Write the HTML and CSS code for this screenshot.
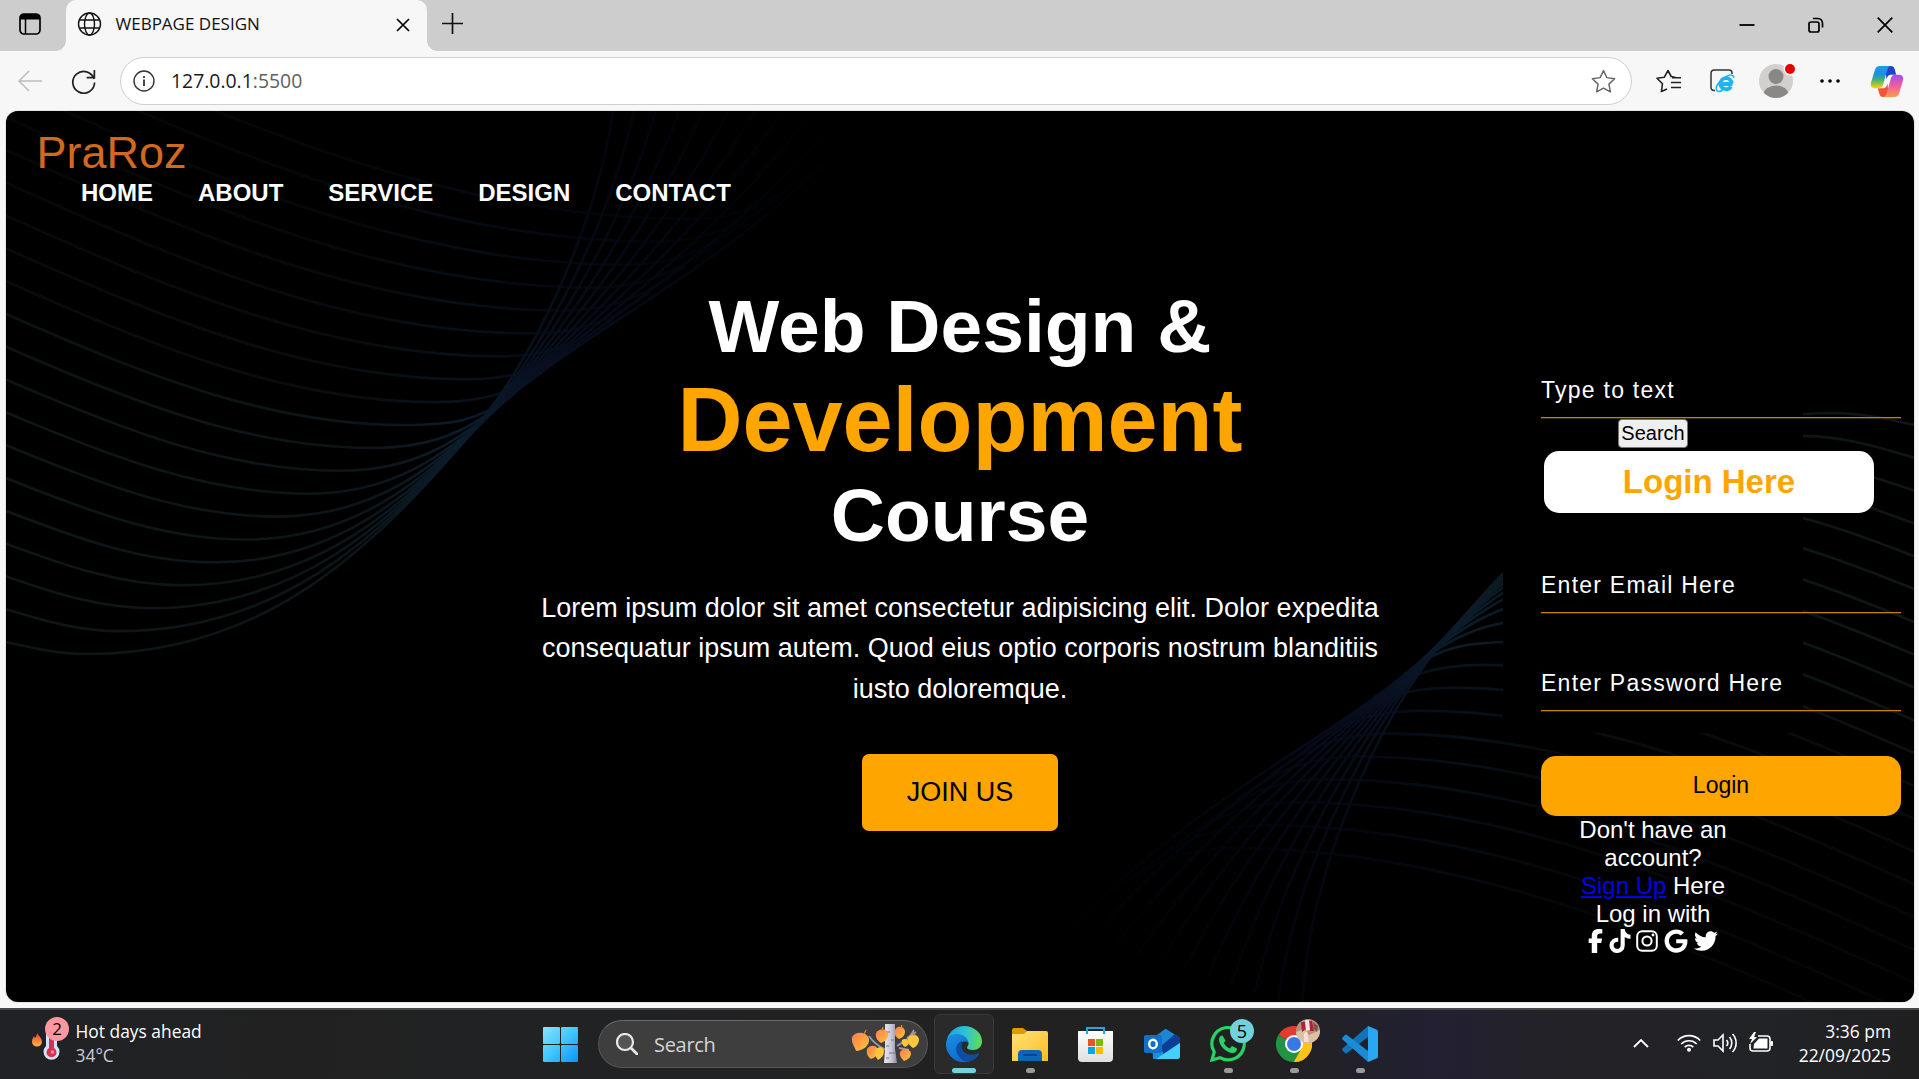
FILE: index.html
```html
<!DOCTYPE html>
<html lang="en">
<head>
<meta charset="utf-8">
<title>WEBPAGE DESIGN</title>
<link rel="stylesheet" href="styles.css">
</head>
<body>
<div class="tabstrip">
  <svg class="workspaces" viewBox="0 0 22 22"><rect x="1" y="1" width="20" height="20" rx="4" fill="none" stroke="#000" stroke-width="1.7"/><path d="M1 6.5V4.500A3.500 3.500 0 0 1 4.500 1h13A3.500 3.500 0 0 1 21 4.500v2z"/><path d="M6.500 6v15" stroke="#000" stroke-width="1.500"/></svg>
  <div class="tab">
    <svg class="globe" viewBox="0 0 24 24" fill="none" stroke="#111" stroke-width="1.400"><circle cx="12" cy="12" r="11"/><ellipse cx="12" cy="12" rx="5" ry="11"/><path d="M2 8h20M2 16h20"/></svg>
    <span class="tab-title">WEBPAGE DESIGN</span>
    <svg class="tab-close" viewBox="0 0 14 14"><path d="M1 1l12 12M13 1L1 13" stroke="#000" stroke-width="1.700"/></svg>
  </div>
  <svg class="newtab" viewBox="0 0 20 20"><path d="M10 0v20M0 10h20" stroke="#111" stroke-width="1.600"/></svg>
  <div class="winctl">
    <svg width="16" height="16" viewBox="0 0 16 16"><path d="M.5 8h15" stroke="#000" stroke-width="1.800"/></svg>
    <svg width="16" height="16" viewBox="0 0 16 16" fill="none" stroke="#000" stroke-width="1.700"><rect x="1" y="5" width="10" height="10" rx="2"/><path d="M5 1.500h5a5 5 0 0 1 4.500 4.500v4.500"/></svg>
    <svg width="16" height="16" viewBox="0 0 16 16"><path d="M.7.7l14.600 14.600M15.300.7L.7 15.300" stroke="#000" stroke-width="1.700"/></svg>
  </div>
</div>
<div class="toolbar">
  <svg class="back" viewBox="0 0 24 22" fill="none" stroke="#bdbdbd" stroke-width="1.500"><path d="M24 11H1M11 1L1 11l10 10"/></svg>
  <svg class="reload" viewBox="0 0 26 26" fill="none" stroke="#222" stroke-width="1.800"><path d="M24 10.500A11.300 11.300 0 1 0 24.500 14M24.300 1v8h-8"/></svg>
  <div class="address">
    <svg class="info" viewBox="0 0 22 22" fill="none" stroke="#333" stroke-width="1.400"><circle cx="11" cy="11" r="10"/><path d="M11 9.500v6.500M11 6v2" stroke-width="1.800"/></svg>
    <span class="url">127.0.0.1<span class="port">:5500</span></span>
    <svg class="star" viewBox="0 0 24 24" fill="none" stroke="#666" stroke-width="1.400" stroke-linejoin="round"><path d="M12 1.500l3.200 6.800 7.500 1-5.500 5.200 1.400 7.400-6.600-3.600-6.600 3.600 1.400-7.400L1.300 9.300l7.500-1z"/></svg>
  </div>
  <svg class="favs" viewBox="0 0 25 24" fill="none" stroke="#222" stroke-width="1.600" stroke-linejoin="round"><path d="M11 20l-5.600 2.500 1.100-7.800L1 9.300l7.200-1L12 1.500l3.200 6 4.300 1M16 8.800h9M15 13.500h10M15 18.500h10"/></svg>
  <svg class="iemode" viewBox="0 0 25 24"><path d="M5 21.500H4A3 3 0 0 1 1 18V4a3 3 0 0 1 3-3h15a3 3 0 0 1 3 3v1" fill="none" stroke="#333" stroke-width="1.500"/><path d="M22.500 15H10.500a5.600 5.600 0 0 1 11.200-.5M10.500 14.500a5.600 5.600 0 0 0 10.400 3" fill="none" stroke="#1eb4ef" stroke-width="3.800"/><path d="M23.500 9c1-3-3-4-7-1.500C11 10 5 17 6.500 21c1 2.500 4 1.500 6 0" fill="none" stroke="#1eb4ef" stroke-width="1.600"/></svg>
  <div class="profile">
    <svg viewBox="0 0 34 34"><defs><clipPath id="pc"><circle cx="17" cy="17" r="17"/></clipPath></defs><g clip-path="url(#pc)"><rect width="34" height="34" fill="#d2d0ce"/><circle cx="17" cy="12.500" r="7.500" fill="#8a8886"/><ellipse cx="17" cy="31" rx="12.500" ry="9.500" fill="#8a8886"/></g></svg>
    <i class="alert"></i>
  </div>
  <svg class="dots" viewBox="0 0 20 4"><circle cx="2" cy="2" r="1.800"/><circle cx="10" cy="2" r="1.800"/><circle cx="18" cy="2" r="1.800"/></svg>
  <svg class="copilot" viewBox="0 0 34 32"><defs>
    <linearGradient id="cA" x1="0" y1="0" x2="0" y2="1"><stop offset="0" stop-color="#1b9de8"/><stop offset=".35" stop-color="#1b8fe0"/><stop offset=".6" stop-color="#3fb07c"/><stop offset="1" stop-color="#ffd400"/></linearGradient>
    <linearGradient id="cB" x1="0" y1="0" x2="0" y2="1"><stop offset="0" stop-color="#a24cf0"/><stop offset=".5" stop-color="#ee5f9b"/><stop offset="1" stop-color="#ff9a4d"/></linearGradient></defs>
    <path d="M15 0h6c2.500 0 3.500 1.500 4 3.500L26.500 9h-5c-3.500 0-4 2-5 5z" fill="#1a47c8"/>
    <path d="M19 32h-6c-2.500 0-3.500-1.500-4-3.500L7.500 23h5c3.500 0 4-2 5-5z" fill="#f4553a"/>
    <path d="M9.500 0H21c-2 0-3 1.500-3.500 3.500L13 19c-.8 2.500-2 4-4.500 4H4.500c-3.500 0-5-3-4-6L4.500 4C5.300 1.500 7 0 9.500 0z" fill="url(#cA)"/>
    <path d="M24.500 32H13c2 0 3-1.500 3.500-3.500L21 13c.8-2.500 2-4 4.500-4h4c3.500 0 5 3 4 6l-4 13c-.8 2.500-2.500 4-5 4z" fill="url(#cB)"/></svg>
</div>

<div class="page">
  <svg class="waves" viewBox="6 111 1908 891" aria-hidden="true">
    <defs>
      <linearGradient id="wave" gradientUnits="userSpaceOnUse" x1="6" y1="0" x2="860" y2="0">
        <stop offset="0" stop-color="#0f1616"/><stop offset=".42" stop-color="#0c1519"/><stop offset=".53" stop-color="#0b1c2a"/><stop offset=".62" stop-color="#091123"/><stop offset=".75" stop-color="#060a1a"/><stop offset="1" stop-color="#000"/>
      </linearGradient>
      <linearGradient id="fade" gradientUnits="userSpaceOnUse" x1="0" y1="111" x2="0" y2="420"><stop offset="0" stop-color="#000" stop-opacity=".6"/><stop offset="1" stop-color="#000" stop-opacity="0"/></linearGradient>
      <g id="family"><g id="strands" fill="none" stroke="url(#wave)" stroke-width="2.600"></g><rect x="0" y="20" width="900" height="400" fill="url(#fade)"/></g>
    </defs>
    <use href="#family"/>
    <use href="#family" transform="rotate(180 960 533.500)"/>
  </svg>

  <header>
    <div class="brand">PraRoz</div>
    <nav><a>HOME</a><a>ABOUT</a><a>SERVICE</a><a>DESIGN</a><a>CONTACT</a></nav>
  </header>
  <main>
    <section class="hero">
      <h1><span>Web Design &amp;</span><span class="accent">Development</span><span class="last">Course</span></h1>
      <p>Lorem ipsum dolor sit amet consectetur adipisicing elit. Dolor expedita<br>consequatur ipsum autem. Quod eius optio corporis nostrum blanditiis<br>iusto doloremque.</p>
      <div class="join">JOIN US</div>
    </section>
    <aside class="panel">
      <div class="field">Type to text</div>
      <div class="search-btn">Search</div>
      <h2>Login Here</h2>
      <div class="field email">Enter Email Here</div>
      <div class="field password">Enter Password Here</div>
      <div class="login-btn">Login</div>
      <div class="signup">Don't have an<br>account?<br><a>Sign Up</a> Here<br>Log in with</div>
      <div class="social">
        <svg width="15" height="24" viewBox="0 0 320 512" preserveAspectRatio="none"><path d="M80 299.300V512H196V299.300h86.500l18-97.800H196V166.900c0-51.700 20.300-71.500 72.700-71.500 16.300 0 29.400.4 37 1.200V7.900C291.400 4 256.400 0 236.200 0 129.300 0 80 50.500 80 159.400v42.100H14v97.800z"/></svg>
        <svg width="22" height="24" viewBox="0 0 448 512"><path d="M448 209.900a210.100 210.100 0 0 1-122.800-39.300v178.800A162.600 162.600 0 1 1 185 188.300v89.900a74.600 74.600 0 1 0 52.200 71.200V0h88a121.200 121.200 0 0 0 1.900 22.200 122.200 122.200 0 0 0 53.900 80.200 121.400 121.400 0 0 0 67 20.100z"/></svg>
        <svg width="22" height="22" viewBox="0 0 22 22"><rect x="1.200" y="1.200" width="19.600" height="19.600" rx="5" fill="none" stroke="#fff" stroke-width="2"/><circle cx="11" cy="11" r="4.600" fill="none" stroke="#fff" stroke-width="2"/><circle cx="17" cy="5" r="1.400"/></svg>
        <svg width="24" height="24" viewBox="0 0 488 512"><path d="M488 261.800C488 403.300 391.100 504 248 504 110.800 504 0 393.200 0 256S110.800 8 248 8c66.800 0 123 24.500 166.300 64.900l-67.500 64.900C258.500 52.600 94.300 116.600 94.300 256c0 86.500 69.100 156.600 153.700 156.600 98.200 0 135-70.400 140.800-106.900H248v-85.300h236.100c2.300 12.700 3.900 24.900 3.900 41.400z"/></svg>
        <svg width="24" height="24" viewBox="0 0 512 512"><path d="M459.400 151.700c.3 4.500.3 9.100.3 13.600 0 138.700-105.600 298.600-298.600 298.600-59.500 0-114.700-17.200-161.100-47.100 8.400 1 16.600 1.300 25.300 1.300 49.100 0 94.200-16.600 130.300-44.800-46.100-1-84.800-31.200-98.100-72.800 6.500 1 13 1.600 19.800 1.600 9.400 0 18.800-1.300 27.600-3.600-48.100-9.700-84.100-52-84.100-103v-1.300c14 7.800 30.200 12.700 47.400 13.300-28.300-18.800-46.800-51-46.800-87.400 0-19.500 5.200-37.400 14.300-53 51.700 63.700 129.300 105.300 216.400 109.800-1.600-7.800-2.600-15.900-2.600-24 0-57.800 46.800-104.900 104.900-104.900 30.200 0 57.500 12.700 76.700 33.100 23.700-4.500 46.500-13.300 66.600-25.300-7.800 24.400-24.400 44.800-46.100 57.800 21.100-2.300 41.600-8.100 60.400-16.200-14.300 20.800-32.200 39.300-52.600 54.300z"/></svg>
      </div>
    </aside>
  </main>
</div>

<div class="taskbar">
  <div class="weather">
    <div class="weather-icon">
      <svg viewBox="0 0 38 46"><defs><linearGradient id="fl" x1="0" y1="0" x2="0" y2="1"><stop offset="0" stop-color="#e8452a"/><stop offset="1" stop-color="#ffb347"/></linearGradient></defs><path d="M5 16c1 2 5 5 5 9a5 4.500 0 0 1-10 0c0-3 1-4 2-6l1 2c1-1 2-3 2-5z" fill="url(#fl)"/><path d="M14 12a5.500 5.500 0 0 1 11 0v17a8 8 0 1 1-11 0z" fill="#cfe4fa"/><path d="M17 14h5v17a5 5 0 1 1-5 0z" fill="#d8304e"/><circle cx="20.500" cy="35" r="1.800" fill="#ff8aa0"/></svg>
      <span class="badge two">2</span>
    </div>
    <div class="weather-text">Hot days ahead<br><span>34°C</span></div>
  </div>
  <svg class="start" viewBox="0 0 35 35"><defs><linearGradient id="st" gradientUnits="userSpaceOnUse" x1="0" y1="0" x2="35" y2="35"><stop offset="0" stop-color="#8ae2ff"/><stop offset=".5" stop-color="#41c6fb"/><stop offset="1" stop-color="#0a94fb"/></linearGradient></defs><g fill="url(#st)"><rect width="17" height="17" rx="1"/><rect x="18" width="17" height="17" rx="1"/><rect y="18" width="17" height="17" rx="1"/><rect x="18" y="18" width="17" height="17" rx="1"/></g></svg>
  <div class="search">
    <svg class="lens" viewBox="0 0 22 22"><circle cx="9" cy="9" r="8" fill="#555" stroke="#e8e8e8" stroke-width="2.200"/><path d="M15 15l6 6" stroke="#e8e8e8" stroke-width="2.800" stroke-linecap="round"/></svg>
    <span>Search</span>
    <svg class="tree" viewBox="0 0 68 40"><defs><linearGradient id="lf" x1="0" y1="0" x2="1" y2="1"><stop offset="0" stop-color="#ff7a4d"/><stop offset="1" stop-color="#ffc53a"/></linearGradient><linearGradient id="tk"><stop offset="0" stop-color="#e8e6ef"/><stop offset=".6" stop-color="#c6c4d2"/><stop offset="1" stop-color="#8d8b9c"/></linearGradient></defs>
      <path d="M35 26Q23 20 18 12M46 22l12-8 5-8M56 14l9-6M48 24l10 2" stroke="#9a98a8" stroke-width="1.800" fill="none"/><path d="M34 0h10v25l2 14H33l1-14z" fill="url(#tk)"/><path d="M35 8h4M40 16h3M35 22h3M38 29h6M35 34h3" stroke="#77758a" stroke-width="1"/>
      <g fill="url(#lf)"><path d="M1 13C4 7 16 7 18 15c1 7-7 12-13 12-1-4-5-8-4-14z"/><path d="M25 9c3-5 10-5 12 0 1 6-4 9-7 10-3-2-6-5-5-10z"/><path d="M44 6c2-5 9-4 10 1 0 5-3 7-6 8-3-2-5-4-4-9z"/><path d="M49 28c3-4 9-4 11 1 0 5-4 7-7 8-2-2-5-5-4-9z"/><path d="M16 25c3-5 10-4 11 1 0 6-4 8-7 9-3-2-5-5-4-10z"/></g>
      <g fill="#fdc63c"><path d="M25 25c3-3 8-2 8 2 0 5-3 7-6 9-2-2-4-7-2-11z"/><path d="M57 14c3-5 10-4 11 1 0 5-3 8-6 9-3-2-6-5-5-10z"/><path d="M51 16c2-2 6-1 7 2 0 3-2 4-4 5-2-1-4-4-3-7z"/></g>
      <path d="M13 10l2-4M31 7l1-4M50 4l1-3M63 12l1-3" stroke="#d98a22" stroke-width="1.200"/></svg>
  </div>
  <div class="apps">
    <div class="app active"><svg viewBox="0 0 36 36"><defs><linearGradient id="eg" x1="0" y1=".4" x2="1" y2=".5"><stop offset="0" stop-color="#1a9fe0"/><stop offset=".5" stop-color="#2fc2d8"/><stop offset="1" stop-color="#5fdc57"/></linearGradient><linearGradient id="eb" x1="0" y1="0" x2=".5" y2="1"><stop offset="0" stop-color="#1b8fe0"/><stop offset="1" stop-color="#0a6cd0"/></linearGradient></defs><path d="M1 13C4 4 11 0 18 0c10 0 18 7 18 15 0 6-4 9-9 9-4 0-6-1-6-2.500 0-1 1.500-1.500 1.500-4C22 12 15 7 1 13z" fill="url(#eg)"/><path d="M0 18C0 12 5 8 11 8c7 0 11 4 11.500 9-3-3-9-1-10 4-1 7 4 13 11 14.500A18 18 0 0 1 0 18z" fill="url(#eb)"/><path d="M16 15c-5 2-7 6-5.500 11C12 31 17 35.500 21 35.800 27 35 31 32 33 28.500c.5-1-.5-1.500-1.300-1-7 3-15 0-16-6-.3-3 .3-5 .3-6.500z" fill="#0c4fa0"/></svg><i></i></div>
    <div class="app"><svg viewBox="0 0 36 36"><defs><linearGradient id="ex" x1="0" y1="0" x2="1" y2="1"><stop offset="0" stop-color="#ffe17a"/><stop offset="1" stop-color="#fdbf22"/></linearGradient></defs><path d="M0 4a2 2 0 0 1 2-2h9l4 3-3 5H0z" fill="#dd9b05"/><path d="M0 8h12l3-3h19a2 2 0 0 1 2 2v28H0z" fill="url(#ex)"/><path d="M6 35v-7a4 4 0 0 1 4-4h16a4 4 0 0 1 4 4v7z" fill="#0c66b8"/><path d="M11 29h14" stroke="#0a4685" stroke-width="2"/></svg><i></i></div>
    <div class="app"><svg viewBox="0 0 36 36"><defs><linearGradient id="so" x1="0" y1="0" x2="0" y2="1"><stop offset="0" stop-color="#fff"/><stop offset="1" stop-color="#dedede"/></linearGradient></defs><path d="M0 5h35v27a4 4 0 0 1-4 4H4a4 4 0 0 1-4-4z" fill="url(#so)"/><path d="M9 8V2h17v6" fill="none" stroke="#26a6de" stroke-width="2"/><path d="M10 13h7v7h-7z" fill="#f25022"/><path d="M18 13h7v7h-7z" fill="#7fba00"/><path d="M10 21h7v7h-7z" fill="#00a4ef"/><path d="M18 21h7v7h-7z" fill="#ffb900"/></svg></div>
    <div class="app"><svg viewBox="0 0 36 36"><path d="M8 13L22 3l14 9v18a3 3 0 0 1-3 3H9z" fill="#1b8fdc"/><path d="M8 13L21 3l12 7-17 12z" fill="#1c86d4"/><path d="M16 21L31 8l5 4v5L20 28z" fill="#0c3f93"/><path d="M12 33l24-16v13a3 3 0 0 1-3 3z" fill="#43d0fb"/><rect y="9" width="18" height="18" rx="2" fill="#1370c8"/><ellipse cx="9" cy="18" rx="3.800" ry="4.300" fill="none" stroke="#fff" stroke-width="2.400"/></svg></div>
    <div class="app"><svg viewBox="0 0 36 36"><path d="M2 34l2.200-8A16.200 16.200 0 1 1 10 31.700z" fill="none" stroke="#25d366" stroke-width="3.200"/><path d="M12.500 9.500c-1-.5-3.500 1-3.500 4C9 20 17 27 22.500 27c3 0 4.500-2 4.500-4.500l-5-2.500-2.200 2.500c-3-1.200-5-3.300-6-5.500l1.700-2.500z" fill="#25d366"/></svg><span class="badge five">5</span><i></i></div>
    <div class="app"><svg viewBox="0 0 36 36"><path d="M18 18L2.400 9A18 18 0 0 1 33.600 9z" fill="#e33b2e"/><path d="M18 18L33.600 9A18 18 0 0 1 18 36z" fill="#fcc419"/><path d="M18 18l7.500 4.500L18 36A18 18 0 0 1 2.400 9z" fill="#229342"/><path d="M18 9h15.600A18 18 0 0 1 18 36l8-13.500z" fill="#fcc419"/><circle cx="18" cy="18" r="9" fill="#fff"/><circle cx="18" cy="18" r="7" fill="#3b78e7"/></svg><svg class="avatar" viewBox="0 0 24 24"><defs><clipPath id="av"><circle cx="12" cy="12" r="12"/></clipPath></defs><g clip-path="url(#av)"><rect width="24" height="24" fill="#b98f7c"/><path d="M0 13l8-3 5 6 11-5v13H0z" fill="#dcc0a4"/><path d="M5 3l4 0 1 7-4 3zM13 2h3l2 10h-4z" fill="#b21f36"/><path d="M9 1h4l1 10-4 1z" fill="#efe2dc"/><path d="M17 3l5 4-1 6-3-3z" fill="#7c5146"/><path d="M8 15l3-3 2 11H8z" fill="#f3dfd3"/></g></svg><i></i></div>
    <div class="app"><svg viewBox="0 0 36 36"><path d="M26 0v11L5 27q-1 1-2 0l-2.500-2.500q-.8-1 0-2z" fill="#1173b8"/><path d="M.5 13.500q-.8-1 0-2L3 9q1-1 2 0l21 16v11z" fill="#1b8bd6"/><path d="M26 0l8.500 3.500Q36 4 36 6v24q0 2-1.500 2.500L26 36z" fill="#2ba6f2"/></svg><i></i></div>
  </div>
  <div class="tray">
    <svg class="chev" viewBox="0 0 16 9"><path d="M1 8l7-7 7 7" fill="none" stroke="#fff" stroke-width="1.800"/></svg>
    <svg class="wifi" viewBox="0 0 24 18" fill="none" stroke="#fff" stroke-width="1.700"><path d="M.8 6.500a15.500 15.500 0 0 1 22.400 0M4.200 10a11 11 0 0 1 15.600 0M7.700 13.200a6.200 6.200 0 0 1 8.600 0"/><circle cx="12" cy="15.800" r="2" fill="#fff" stroke="none"/></svg>
    <svg class="vol" viewBox="0 0 24 20" fill="none" stroke="#fff" stroke-width="1.600"><path d="M1 7h4l5-5v16l-5-5H1zM13.500 7a4.500 4.500 0 0 1 0 6M16.500 4a9 9 0 0 1 0 12M19.500 1a13 13 0 0 1 0 18"/></svg>
    <svg class="bat" viewBox="0 0 24 20"><path d="M9 4h9a3 3 0 0 1 3 3v9a3 3 0 0 1-3 3H4a3 3 0 0 1-3-3v-4" fill="none" stroke="#fff" stroke-width="1.600"/><path d="M10 6.500h8.500v10H4.500L5 12z" fill="#fff"/><rect x="21.500" y="9" width="2.500" height="5" rx="1" fill="#fff"/><path d="M5 0L0 7h3l-2 5 7-7H5l2-5z" fill="#fff"/></svg>
    <div class="clock">3:36 pm<br>22/09/2025</div>
  </div>
</div>
<script src="waves.js"></script>
</body>
</html>
```
FILE: styles.css
```css
* { box-sizing: border-box; }
body { margin: 0; width: 1919px; height: 1079px; overflow: hidden; display: flex; flex-direction: column; background: #f7f7f7; font-family: "Open Sans", "Noto Sans", sans-serif; }
svg { display: block; flex: none; }

.tabstrip { height: 51px; flex: none; background: #cdcdcd; display: flex; align-items: flex-start; }
.workspaces { width: 22px; height: 22px; margin: 13px 0 0 19px; }
.tab { position: relative; width: 361px; height: 51px; margin-left: 25px; padding-left: 10.500px; background: #f7f7f7; border-radius: 10px 10px 0 0; display: flex; align-items: flex-start; }
.tab::before, .tab::after { content: ""; position: absolute; bottom: 0; width: 10px; height: 10px; }
.tab::before { left: -10px; background: radial-gradient(circle at 0 0, transparent 9.5px, #f7f7f7 10px); }
.tab::after { right: -10px; background: radial-gradient(circle at 100% 0, transparent 9.5px, #f7f7f7 10px); }
.globe { width: 25px; height: 24px; margin-top: 12px; }
.tab-title { margin-left: 14px; width: 266px; font-size: 17px; line-height: 24px; margin-top: 12px; color: #111; white-space: nowrap; }
.tab-close { width: 14px; height: 14px; margin-top: 18px; margin-left: 14px; }
.newtab { width: 21px; height: 21px; margin: 13px 0 0 15px; }
.winctl { margin: 17px 26px 0 auto; display: flex; gap: 53px; }

.toolbar { height: 60px; flex: none; display: flex; align-items: center; }
.back { width: 24px; height: 22px; margin-left: 18px; }
.reload { width: 25px; height: 25px; margin-left: 29px; }
.address { width: 1512px; height: 48px; margin-left: 24px; border: 1.5px solid #cfcfcf; border-radius: 24px; background: #fff; display: flex; align-items: center; padding: 0 15px 0 12px; }
.info { width: 22px; height: 22px; }
.url { margin-left: 16px; font-size: 19.400px; line-height: 26px; color: #1b1b1b; flex: 1; }
.port { color: #5f5f5f; }
.star { width: 25px; height: 25px; }
.favs { width: 25px; height: 24px; margin-left: 23.500px; }
.iemode { width: 25px; height: 24px; margin-left: 29px; }
.profile { position: relative; width: 34px; height: 34px; margin-left: 24.500px; }
.alert { position: absolute; right: -2px; top: 0; width: 10px; height: 10px; border-radius: 50%; background: #e60000; box-shadow: 0 0 0 1.5px #f7f7f7; }
.dots { width: 20px; height: 4px; margin-left: 27px; }
.copilot { width: 34px; height: 31px; margin-left: 30px; }

.page { position: relative; z-index: 0; height: 891px; flex: none; margin: 0 5px 0 6px; background: #000; border-radius: 12px; overflow: hidden; color: #fff; font-family: "Liberation Sans", Arial, sans-serif; padding-top: 16px; box-shadow: 0 0 0 1px #e4e4e4; }
.waves { position: absolute; inset: 0; z-index: -1; width: 1908px; height: 891px; }
.brand { margin-left: 30.500px; font-size: 45px; line-height: 51px; color: #d2691e; }
nav { display: flex; gap: 45px; margin-left: 75px; font-size: 24px; line-height: 29px; font-weight: bold; }
main { display: flex; align-items: flex-start; }
.hero { width: 860px; margin: 74px 0 0 524px; text-align: center; display: flex; flex-direction: column; align-items: center; }
h1 { margin: 0; font-size: 75px; line-height: 90px; }
h1 span { display: block; }
h1 .accent { color: #ffa500; font-size: 90px; line-height: 98px; }
h1 .last { line-height: 92px; }
.hero p { margin: 26.500px 0 0; font-size: 27px; line-height: 40.6px; white-space: nowrap; }
.join { margin-top: 44.500px; width: 196px; height: 77px; border-radius: 7px; background: #ffa500; color: #000; font-size: 27px; line-height: 76px; }
.panel { width: 300px; height: 486px; margin: 40px 0 0 113px; padding: 126px 0 0 38px; background: #000; }
.field { width: 360px; height: 45px; font-size: 23px; line-height: 34px; letter-spacing: 1.25px; border-bottom: 1px solid #c98200; box-shadow: 0 1px 0 #3d2700; }
.search-btn { width: 70px; height: 29px; margin: 1px 0 0 77px; border: 1px solid #767676; border-radius: 4px; background: #efefef; color: #000; font-size: 20px; line-height: 27px; text-align: center; }
h2 { width: 330px; height: 62px; margin: 3px 0 0 3px; border-radius: 15px; background: #fff; color: #ffa500; font-size: 33px; line-height: 61px; text-align: center; }
.email { margin-top: 55px; }
.password { margin-top: 53px; }
.login-btn { width: 360px; height: 60px; margin-top: 45px; border-radius: 15px; background: #ffa500; color: #000; font-size: 23px; line-height: 58px; text-align: center; }
.signup { width: 300px; margin-left: -38px; font-size: 24px; line-height: 28px; text-align: center; }
.signup a { color: #0000ee; text-decoration: underline; }
.social { display: flex; align-items: center; gap: 5.700px; margin: 0 0 0 47px; height: 26px; width: 140px; }
.social svg { fill: #fff; }

.taskbar { height: 71px; flex: none; margin-top: 6px; border-top: 2px solid #47484a; background: linear-gradient(90deg, #202226 0, #212121 15%, #212224 30%, #212121 50%, #212121 66%, #222032 75%, #232228 80%, #222326 92%, #1f1f20 100%); display: flex; align-items: flex-start; color: #fff; }
.weather { width: 543px; display: flex; padding-left: 32px; }
.weather-icon { position: relative; width: 38px; height: 46px; margin-top: 7px; }
.weather-icon > svg { width: 38px; height: 46px; }
.badge { position: absolute; width: 24px; height: 24px; border-radius: 50%; color: #000; font-size: 17px; line-height: 24px; text-align: center; }
.two { left: 13px; top: 0; background: #ff97a0; }
.weather-text { margin: 9px 0 0 5.500px; font-size: 17.4px; line-height: 24px; }
.weather-text span { color: #ccc; }
.start { width: 35px; height: 35px; margin-top: 17px; }
.search { width: 330px; height: 48px; margin: 10px 0 0 20px; border: 1.5px solid #555; border-top-color: #6a6a6a; border-radius: 24px; background: #3e3e3e; display: flex; align-items: center; padding: 0 8px 0 17px; font-size: 20px; letter-spacing: -.3px; color: #d4d4d4; }
.lens { width: 22px; height: 22px; }
.search span { margin-left: 16px; flex: 1; }
.tree { width: 68px; height: 40px; }
.apps { display: flex; gap: 6px; margin: 4px 0 0 6px; }
.app { position: relative; width: 60px; height: 60px; padding: 12px; border-radius: 6px; }
.app.active { background: #2a2a2a; border: 1px solid #3a3a3a; padding: 11px; }
.app > svg:first-child { width: 36px; height: 36px; }
.app i { position: absolute; bottom: 1px; left: 26px; width: 9px; height: 5px; border-radius: 3px; background: #9a9a9a; }
.app.active i { left: 17px; bottom: 0; width: 24px; background: #76d0dc; }
.five { left: 32px; top: 5px; background: #72d1dc; font-size: 18px; }
.avatar { position: absolute; left: 32px; top: 5px; width: 24px; height: 24px; }
.tray { margin: 0 28px 0 auto; display: flex; align-items: flex-start; }
.chev { width: 16px; height: 9px; margin: 29px 28px 0 0; }
.wifi { width: 24px; height: 18px; margin: 24px 12px 0 0; }
.vol { width: 24px; height: 20px; margin: 23px 12px 0 0; }
.bat { width: 24px; height: 20px; margin: 22px 26px 0 0; }
.clock { font-size: 17.4px; line-height: 24px; text-align: right; margin-top: 9px; white-space: nowrap; }
```
FILE: waves.js
```js
// Builds the strands of the background weave: each one dips, meets the twist and fans out.
const group = document.getElementById('strands');
for (let i = 0; i < 20; i++) {
  const y0 = 642 - 32.8 * i;
  const mx = 87 + 31.7 * i, my = 654 - 22.9 * i;
  let d = `M6 ${y0}C${6 + (mx - 6) * 0.35} ${y0 + (my - y0) * 0.55} ${6 + (mx - 6) * 0.66} ${my} ${mx} ${my}`;
  if (i < 11) {
    const k = i / 10;
    const tx = 480 + 32 * k, ty = 422 - 27 * k;
    const slope = 1.22 - 0.4 * k;
    const a = (tx - mx) * 0.3;
    d += `C${mx + (tx - mx) * 0.42} ${my} ${tx - a} ${Math.min(ty + a * slope, my)} ${tx} ${ty}`;
    d += `C${tx + 58 + 38 * k} ${ty - (58 + 38 * k) * slope} ${612 + 110 * k} ${200 + 70 * k} ${618 + 235 * k} ${60 + 75 * k}`;
  } else {
    const tx = 545 + 35 * (i - 11), ty = 400 - 0.74 * (tx - 505);
    const dx = tx - mx;
    d += `C${mx + dx * 0.5} ${my} ${tx - dx * 0.25} ${ty + dx * 0.17} ${tx} ${ty}`;
  }
  const p = document.createElementNS('http://www.w3.org/2000/svg', 'path');
  p.setAttribute('d', d);
  // The upper strands sink into the dark.
  p.setAttribute('opacity', i < 11 ? 1 : 0.7);
  group.appendChild(p);
}
```
